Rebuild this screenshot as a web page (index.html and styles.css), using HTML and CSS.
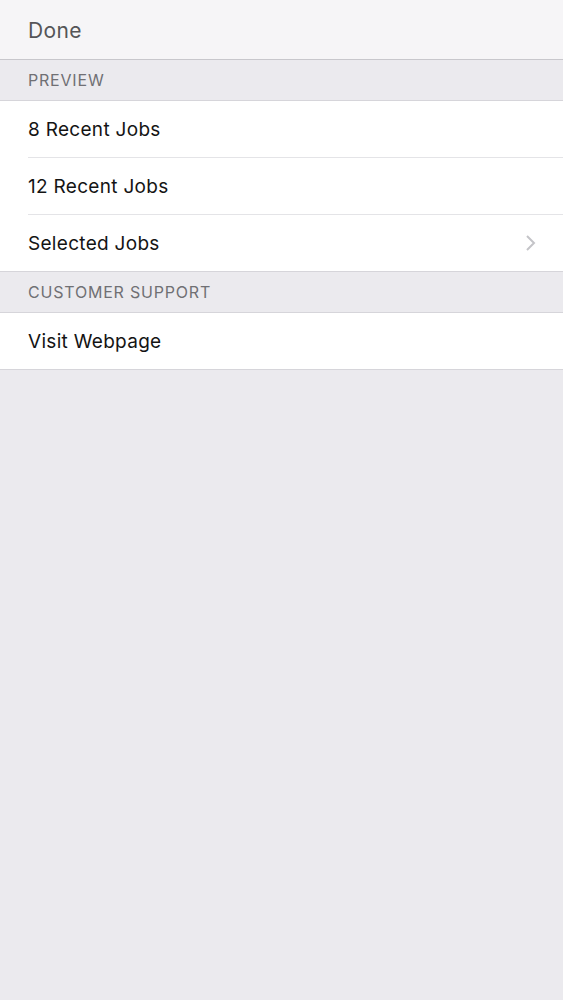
FILE: index.html
```html
<!DOCTYPE html>
<html>
<head>
<meta charset="utf-8">
<link rel="stylesheet" href="styles.css">
</head>
<body>
<div class="navbar"><span class="done">Done</span></div>
<div class="section-header">PREVIEW</div>
<div class="group">
  <div class="row"><span class="label">8 Recent Jobs</span></div>
  <div class="row"><span class="label">12 Recent Jobs</span></div>
  <div class="row"><span class="label">Selected Jobs</span>
    <svg class="chevron" width="12" height="18" viewBox="0 0 12 18"><path d="M2 2 L9 9 L2 16" fill="none" stroke="#c4c4c8" stroke-width="2"/></svg>
  </div>
</div>
<div class="section-header">CUSTOMER SUPPORT</div>
<div class="group">
  <div class="row"><span class="label">Visit Webpage</span></div>
</div>
</body>
</html>
```
FILE: styles.css
```css
html, body {
  margin: 0;
  padding: 0;
  background: #ebeaee;
  font-family: Inter, "Open Sans", "Liberation Sans", sans-serif;
  height: 1000px;
}
.navbar {
  height: 60px;
  background: #f6f5f7;
  border-bottom: 1px solid #c8c7cc;
  display: flex;
  align-items: center;
  padding-left: 28px;
  box-sizing: border-box;
}
.done {
  font-size: 21px;
  color: #555558;
  letter-spacing: 0.4px;
  padding-top: 1px;
}
.section-header {
  height: 41px;
  box-sizing: border-box;
  padding-left: 28px;
  display: flex;
  align-items: center;
  font-size: 16px;
  color: #707074;
  letter-spacing: 0.8px;
  border-bottom: 1px solid #d6d5da;
}
.group {
  background: #fff;
  border-bottom: 1px solid #d6d5da;
}
.row {
  height: 57px;
  margin-left: 28px;
  padding-right: 26px;
  display: flex;
  align-items: center;
  justify-content: space-between;
  box-sizing: border-box;
  border-bottom: 1px solid #e4e4e7;
}
.row:last-child {
  border-bottom: none;
  height: 56px;
}
.label {
  font-size: 19px;
  color: #141414;
  letter-spacing: 0.3px;
}
.chevron {
  display: block;
}
```
